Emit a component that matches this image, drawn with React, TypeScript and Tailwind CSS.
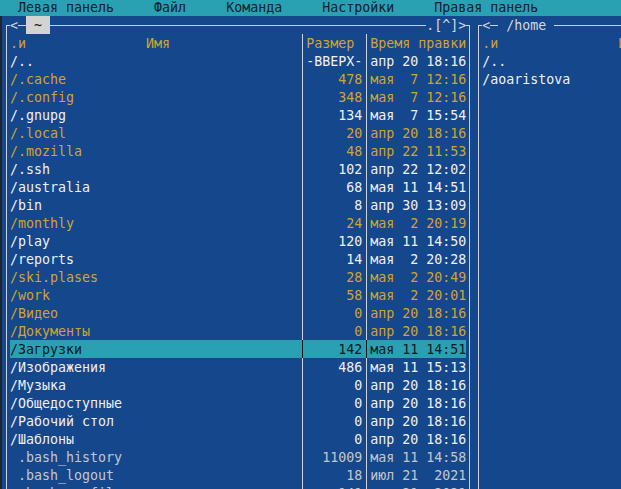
type Tone = 'white' | 'yellow' | 'gray' | 'sel';

type Entry = { name: string; size: string; date: string; tone: Tone };

const leftFiles: Entry[] = [
  { name: '/..', size: '-ВВЕРХ-', date: 'апр 20 18:16', tone: 'white' },
  { name: '/.cache', size: '478', date: 'мая  7 12:16', tone: 'yellow' },
  { name: '/.config', size: '348', date: 'мая  7 12:16', tone: 'yellow' },
  { name: '/.gnupg', size: '134', date: 'мая  7 15:54', tone: 'white' },
  { name: '/.local', size: '20', date: 'апр 20 18:16', tone: 'yellow' },
  { name: '/.mozilla', size: '48', date: 'апр 22 11:53', tone: 'yellow' },
  { name: '/.ssh', size: '102', date: 'апр 22 12:02', tone: 'white' },
  { name: '/australia', size: '68', date: 'мая 11 14:51', tone: 'white' },
  { name: '/bin', size: '8', date: 'апр 30 13:09', tone: 'white' },
  { name: '/monthly', size: '24', date: 'мая  2 20:19', tone: 'yellow' },
  { name: '/play', size: '120', date: 'мая 11 14:50', tone: 'white' },
  { name: '/reports', size: '14', date: 'мая  2 20:28', tone: 'white' },
  { name: '/ski.plases', size: '28', date: 'мая  2 20:49', tone: 'yellow' },
  { name: '/work', size: '58', date: 'мая  2 20:01', tone: 'yellow' },
  { name: '/Видео', size: '0', date: 'апр 20 18:16', tone: 'yellow' },
  { name: '/Документы', size: '0', date: 'апр 20 18:16', tone: 'yellow' },
  { name: '/Загрузки', size: '142', date: 'мая 11 14:51', tone: 'sel' },
  { name: '/Изображения', size: '486', date: 'мая 11 15:13', tone: 'white' },
  { name: '/Музыка', size: '0', date: 'апр 20 18:16', tone: 'white' },
  { name: '/Общедоступные', size: '0', date: 'апр 20 18:16', tone: 'white' },
  { name: '/Рабочий стол', size: '0', date: 'апр 20 18:16', tone: 'white' },
  { name: '/Шаблоны', size: '0', date: 'апр 20 18:16', tone: 'white' },
  { name: ' .bash_history', size: '11009', date: 'мая 11 14:58', tone: 'gray' },
  { name: ' .bash_logout', size: '18', date: 'июл 21  2021', tone: 'gray' },
  { name: ' .bash_profile', size: '141', date: 'июл 21  2021', tone: 'gray' },
];

const rightFiles: Entry[] = [
  { name: '/..', size: '-ВВЕРХ-', date: 'апр 20 18:16', tone: 'white' },
  { name: '/aoaristova', size: '4096', date: 'мая 11 14:51', tone: 'white' },
];

const toneClass: Record<Tone, string> = {
  white: 'text-[#f0f0f0]',
  yellow: 'text-[#cfa52f]',
  gray: 'text-[#c3c7cd]',
  sel: 'bg-[#2aa1b3] text-[#0e1820]',
};

function Sep({ dark }: { dark?: boolean }) {
  return (
    <span className="w-[1ch] shrink-0 flex justify-center">
      <span className={dark ? 'w-px bg-[#0e1820]' : 'w-px bg-[#cfd3d8]'} />
    </span>
  );
}

function Row({ e }: { e: Entry }) {
  return (
    <div className={`h-[18px] flex whitespace-pre ${toneClass[e.tone]}`}>
      <span className="w-[36ch] shrink-0 overflow-hidden">{e.name}</span>
      <Sep dark={e.tone === 'sel'} />
      <span className="w-[7ch] shrink-0 text-right">{e.size}</span>
      <Sep dark={e.tone === 'sel'} />
      <span className="w-[12ch] shrink-0">{e.date}</span>
    </div>
  );
}

function Panel({ title, active, files }: { title: string; active?: boolean; files: Entry[] }) {
  return (
    <div className="w-[59ch] shrink-0 bg-[#15478c] pt-[9px]">
      <div className="mx-[0.5ch] border-t border-x border-[#cfd3d8] px-[calc(0.5ch-1px)]">
        {/* заголовок поверх рамки */}
        <div className="-mt-[10px] h-[18px] flex whitespace-pre text-[#d4d8dd]">
          <span className="bg-[#15478c]">{'<'}</span>
          <span className="w-[1ch]" />
          <span className={active ? 'bg-[#d3d3d3] text-[#202020]' : 'bg-[#15478c]'}>{title}</span>
          <span className="flex-1" />
          {active && <span className="bg-[#15478c]">{'.[^]>'}</span>}
        </div>

        <div className="h-[18px] flex whitespace-pre text-[#cfa52f]">
          <span className="w-[36ch] shrink-0">{'.и               Имя'}</span>
          <Sep />
          <span className="w-[7ch] shrink-0">Размер</span>
          <Sep />
          <span className="w-[12ch] shrink-0">Время правки</span>
        </div>

        {files.map((f) => (
          <Row key={f.name} e={f} />
        ))}
        {files.length < 25 &&
          Array.from({ length: 25 - files.length }).map((_, i) => (
            <Row key={'empty' + i} e={{ name: '', size: '', date: '', tone: 'white' }} />
          ))}
      </div>
    </div>
  );
}

export default function App() {
  return (
    <div className="w-[621px] h-[489px] overflow-hidden bg-[#1c2530] font-['DejaVu_Sans_Mono',monospace] text-[13.3px] leading-[20px]">
      <div className="-mt-[2px]">
        <div className="h-[18px] bg-[#2aa1b3] text-[#13202b] whitespace-pre pl-[2px]">
          {'  Левая панель     Файл     Команда     Настройки     Правая панель'}
        </div>
        <div className="flex pl-[2px]">
          <Panel title=" ~ " active files={leftFiles} />
          <Panel title=" /home " files={rightFiles} />
        </div>
      </div>
    </div>
  );
}
